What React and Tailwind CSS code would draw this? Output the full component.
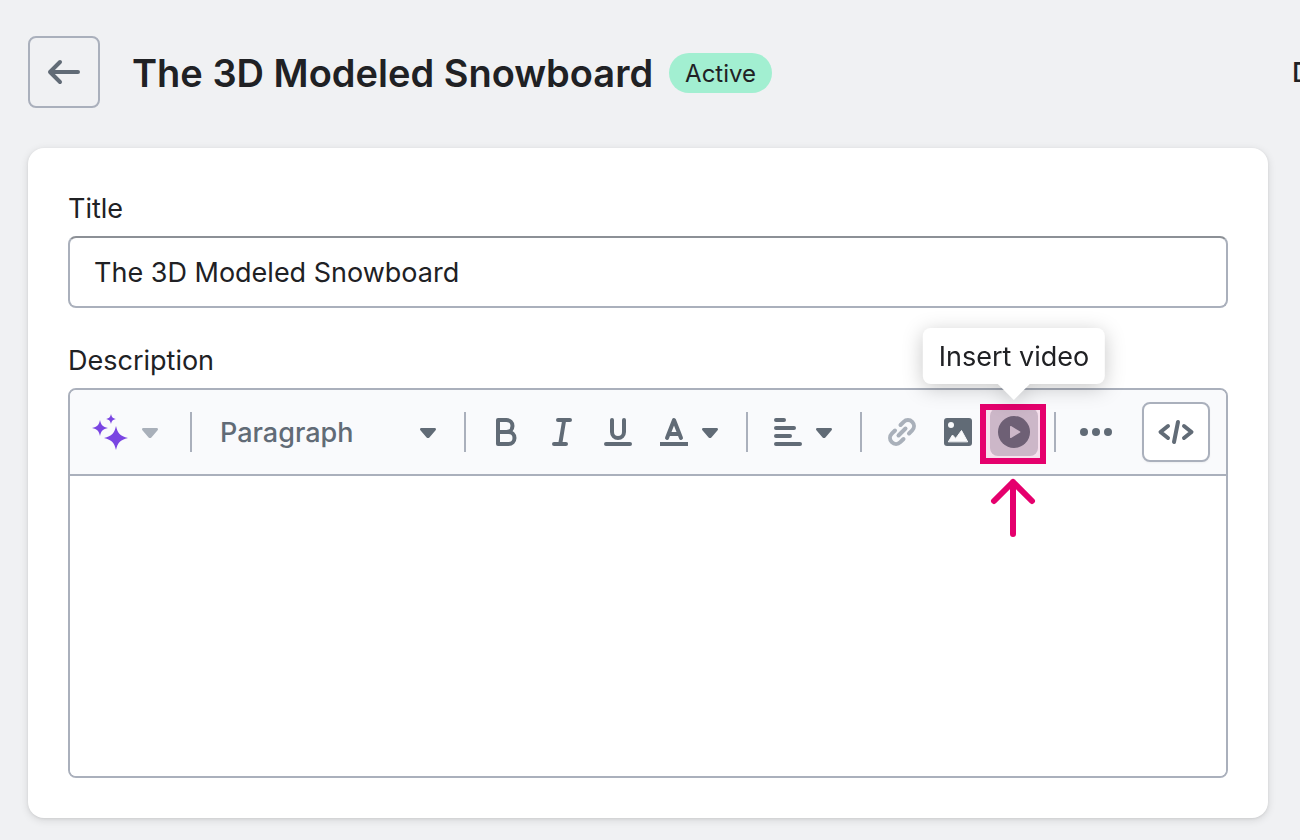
import React from "react";

function Icon({ children, strokeWidth = 4 }) {
  return (
    <svg
      className="size-10 shrink-0"
      viewBox="0 0 40 40"
      fill="none"
      stroke="currentColor"
      strokeWidth={strokeWidth}
      strokeLinecap="round"
      strokeLinejoin="round"
      aria-hidden="true"
    >
      {children}
    </svg>
  );
}

function Caret() {
  return (
    <svg className="h-4 w-4 shrink-0" viewBox="0 0 16 16" fill="currentColor" aria-hidden="true">
      <path d="M1.3 4h13.4c1.2 0 1.7 1.4.9 2.2l-6.2 7.2c-.8.9-2 .9-2.8 0L.4 6.2C-.4 5.4.1 4 1.3 4z" />
    </svg>
  );
}

function Divider() {
  return <span className="mx-4 h-10 w-0.5 shrink-0 bg-[#aab0bc]" />;
}

function ToolButton({ label, children }) {
  return (
    <button type="button" aria-label={label} className="flex size-12 shrink-0 items-center justify-center rounded-lg">
      {children}
    </button>
  );
}

function VideoButton() {
  return (
    <div className="relative shrink-0">
      <button
        type="button"
        aria-label="Insert video"
        className="flex size-12 items-center justify-center rounded-lg bg-[#caccd3]"
      >
        <Icon>
          <circle cx="20" cy="20" r="16" fill="currentColor" stroke="none" />
          <path d="M16 14.6v10.8c0 .6.6.9 1.1.6l9-5.4c.5-.3.5-.9 0-1.2l-9-5.4c-.5-.3-1.1 0-1.1.6z" fill="#caccd3" stroke="none" />
        </Icon>
      </button>
      <span className="pointer-events-none absolute -top-1 -right-2 -bottom-2 -left-2.5 border-6 border-[#e5006d] bg-[#e5006d]/10" />
      <svg
        className="pointer-events-none absolute top-[70px] left-0 h-[60px] w-[46px]"
        viewBox="0 0 46 60"
        fill="none"
        stroke="#e5006d"
        strokeWidth="6"
        strokeLinecap="round"
        strokeLinejoin="round"
        aria-hidden="true"
      >
        <path d="M23 56V4M4 23 23 4l19 19" />
      </svg>
      <div className="absolute bottom-18 left-1/2 -translate-x-1/2 drop-shadow-[0_4px_10px_rgba(0,0,0,0.22)]">
        <div role="tooltip" className="rounded-lg bg-white px-4 pt-[9px] pb-[7px] text-[27px] leading-10 whitespace-nowrap text-[#202124]">
          Insert video
        </div>
        <svg className="absolute top-full left-1/2 h-4 w-8 -translate-x-1/2" viewBox="0 0 32 16" fill="white" aria-hidden="true">
          <path d="M0 0h32L16 16z" />
        </svg>
      </div>
    </div>
  );
}

function Toolbar() {
  return (
    <div className="flex items-center rounded-t-md border-b-2 border-[#aab0bc] bg-[#f9fafc] py-3 pr-4 pl-4 text-[#616b76]">
      <button type="button" aria-label="Generate text" className="flex shrink-0 items-center gap-3 pr-4 pl-1 text-[#a9b0ba]">
        <span className="text-[#7a45e2]">
          <Icon>
            <g fill="currentColor" stroke="none">
              <path d="M26 14c1.7 7.5 4 10 12 12-8 2-10.300 4.500-12 12-1.700-7.500-4-10-12-12 8-2 10.300-4.500 12-12z" />
              <path d="M10 8c1.100 5 2.700 6.900 8 8-5.300 1.100-6.900 3-8 8-1.100-5-2.700-6.900-8-8 5.300-1.100 6.900-3 8-8z" />
              <path d="M21 2c.7 3.200 1.800 4.300 5 5-3.200.7-4.300 1.800-5 5-.7-3.200-1.800-4.300-5-5 3.200-.7 4.300-1.800 5-5z" />
            </g>
          </Icon>
        </span>
        <Caret />
      </button>
      <Divider />
      <div className="relative w-60 shrink-0">
        <select
          aria-label="Text style"
          className="block h-12 w-full appearance-none bg-transparent pt-0.5 pl-3 text-[27px] font-medium text-[#616b76]"
          defaultValue="Paragraph"
        >
          <option>Paragraph</option>
        </select>
        <span className="pointer-events-none absolute top-4 right-3">
          <Caret />
        </span>
      </div>
      <Divider />
      <div className="flex shrink-0 items-center gap-2">
        <ToolButton label="Bold">
          <Icon>
            <path d="M12 8v24h10.500a6 6 0 0 0 0-12H12h8.500a6 6 0 0 0 0-12z" />
          </Icon>
        </ToolButton>
        <ToolButton label="Italic">
          <Icon>
            <path d="M16 8h12M12 32h12M22.200 8 18.200 32" />
          </Icon>
        </ToolButton>
        <ToolButton label="Underline">
          <Icon>
            <path d="M14 8v12a6 6 0 0 0 12 0V8M8 32h24" />
          </Icon>
        </ToolButton>
        <button type="button" aria-label="Text color" className="flex items-center gap-2 pr-3 pl-1">
          <Icon>
            <path d="M13 26 20 8l7 18M15 22h10" />
            <path d="M6 32h28" strokeLinecap="butt" />
          </Icon>
          <Caret />
        </button>
      </div>
      <Divider />
      <button type="button" aria-label="Alignment" className="flex shrink-0 items-center gap-2 pr-3 pl-1">
        <Icon>
          <path d="M8 8h8M8 16h18M8 24h14M8 32h24" />
        </Icon>
        <Caret />
      </button>
      <Divider />
      <div className="flex shrink-0 items-center gap-2">
        <ToolButton label="Insert link">
          <span className="text-[#a9b0ba]">
            <Icon>
              <path d="m18.500 13 3.200-3.200a6 6 0 0 1 8.500 8.500L27 21.500M21.500 27l-3.200 3.200a6 6 0 0 1-8.500-8.500L13 18.500M16.500 23.500l7-7" />
            </Icon>
          </span>
        </ToolButton>
        <ToolButton label="Insert image">
          <Icon>
            <rect x="6" y="6" width="28" height="28" rx="3" fill="currentColor" stroke="none" />
            <circle cx="13" cy="13" r="3" fill="#f9fafc" stroke="none" />
            <path d="M10.500 29.500 14.500 23l3.200 3.400 5.800-7.900 6 11z" fill="#f9fafc" stroke="#f9fafc" strokeWidth="1" />
          </Icon>
        </ToolButton>
        <VideoButton />
      </div>
      <Divider />
      <ToolButton label="More">
        <Icon>
          <g fill="currentColor" stroke="none">
            <circle cx="8" cy="20" r="4" />
            <circle cx="20" cy="20" r="4" />
            <circle cx="32" cy="20" r="4" />
          </g>
        </Icon>
      </ToolButton>
      <button
        type="button"
        aria-label="Show HTML"
        className="ml-auto flex h-15 w-17 shrink-0 items-center justify-center rounded-lg border-2 border-[#aab0bc] bg-white shadow-xs"
      >
        <Icon>
          <path d="M12 14 4.500 20l7.500 6M22 10l-4 20M28 14l7.500 6-7.500 6" />
        </Icon>
      </button>
    </div>
  );
}

export default function App() {
  return (
    <div className="min-h-screen overflow-hidden bg-[#f0f1f3] pt-9 pb-[22px] font-['Inter',sans-serif] text-[#202124]">
      <header className="flex items-center pl-7">
        <button
          type="button"
          aria-label="Back"
          className="flex size-18 shrink-0 items-center justify-center rounded-lg border-2 border-[#aab0bc] text-[#616b76]"
        >
          <Icon>
            <path d="M34 20H6M16 10 6 20l10 10" />
          </Icon>
        </button>
        <div className="ml-8 flex flex-1 items-center pt-0.5">
          <h1 className="text-[38px] leading-12 font-semibold whitespace-nowrap">The 3D Modeled Snowboard</h1>
          <span className="ml-4 h-10 rounded-full bg-[#a2efd1] px-4 pt-px text-2xl leading-10">Active</span>
          <button type="button" className="ml-auto w-2 overflow-hidden text-left text-[27px] leading-10 font-medium">
            D
          </button>
        </div>
      </header>

      <main className="mt-10 mr-8 ml-7 rounded-2xl bg-white p-10 shadow-[0_2px_8px_rgba(23,24,24,0.12),0_1px_3px_rgba(0,0,0,0.08)]">
        <label htmlFor="title" className="block pt-px text-[27px] leading-10">
          Title
        </label>
        <input
          id="title"
          type="text"
          defaultValue="The 3D Modeled Snowboard"
          className="mt-[7px] block h-18 w-full rounded-lg border-2 border-[#aab0bc] border-t-[#8c9096] bg-white px-6 text-[27px]"
        />
        <label htmlFor="description" className="mt-8 block pt-px text-[27px] leading-10">
          Description
        </label>
        <div className="mt-[7px] rounded-lg border-2 border-[#aab0bc] bg-white">
          <Toolbar />
          <textarea id="description" className="block h-75 w-full resize-none rounded-b-md bg-white px-6 py-4 text-[27px]" />
        </div>
      </main>
    </div>
  );
}
